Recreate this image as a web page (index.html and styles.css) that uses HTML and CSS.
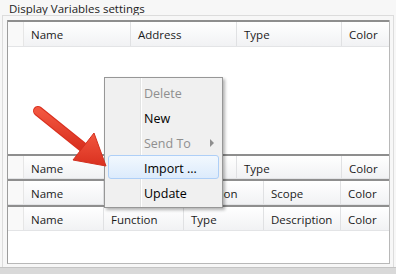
FILE: index.html
```html
<!DOCTYPE html>
<html lang="en">
<head>
    <meta charset="UTF-8">
    <title>Display Variables settings</title>
    <link rel="stylesheet" href="styles.css">
</head>
<body>
    <div class="group">
        <div class="group-title">Display Variables settings</div>
        <div class="group-box">
            <div class="grid">
                <div class="pane pane-top">
                    <div class="header cols-a">
                        <div class="cell rowhead"></div>
                        <div class="cell">Name</div>
                        <div class="cell">Address</div>
                        <div class="cell">Type</div>
                        <div class="cell">Color</div>
                    </div>
                    <div class="body"></div>
                </div>
                <div class="pane pane-short">
                    <div class="header cols-a">
                        <div class="cell rowhead"></div>
                        <div class="cell">Name</div>
                        <div class="cell"></div>
                        <div class="cell">Type</div>
                        <div class="cell">Color</div>
                    </div>
                </div>
                <div class="pane">
                    <div class="header cols-b">
                        <div class="cell rowhead"></div>
                        <div class="cell">Name</div>
                        <div class="cell"></div>
                        <div class="cell">Function</div>
                        <div class="cell">Scope</div>
                        <div class="cell">Color</div>
                    </div>
                </div>
                <div class="pane pane-last">
                    <div class="header cols-b">
                        <div class="cell rowhead"></div>
                        <div class="cell">Name</div>
                        <div class="cell">Function</div>
                        <div class="cell">Type</div>
                        <div class="cell">Description</div>
                        <div class="cell">Color</div>
                    </div>
                    <div class="body"></div>
                </div>
            </div>
        </div>
    </div>

    <!-- context menu -->
    <div class="menu">
        <div class="menu-item disabled">Delete</div>
        <div class="menu-item">New</div>
        <div class="menu-item disabled">Send To <span class="sub-arrow"></span></div>
        <div class="menu-item active">Import ...</div>
        <div class="menu-item">Update</div>
    </div>

    <!-- red pointer arrow -->
    <svg class="pointer" width="396" height="274" viewBox="0 0 396 274">
        <defs>
            <linearGradient id="red" x1="0" y1="0" x2="0" y2="1">
                <stop offset="0" stop-color="#f2563f"/>
                <stop offset="1" stop-color="#d9301f"/>
            </linearGradient>
        </defs>
        <line x1="38" y1="111" x2="84" y2="148" stroke="#d9301f" stroke-width="10" stroke-linecap="round"/>
        <line x1="38" y1="111" x2="84" y2="148" stroke="url(#red)" stroke-width="8" stroke-linecap="round"/>
        <polygon points="106,166 73,160 94,133" fill="url(#red)" stroke="#d3301f" stroke-width="1" stroke-linejoin="round"/>
    </svg>
</body>
</html>
```
FILE: styles.css
```css
* {
    margin: 0;
    padding: 0;
    box-sizing: border-box;
}

body {
    width: 396px;
    height: 274px;
    overflow: hidden;
    background: #d9d9d9;
    font-family: "Open Sans", "Noto Sans", sans-serif;
    color: #1b1b1b;
    position: relative;
}

.group {
    height: 268px;
    background: #f7f7f7;
    padding: 3px 2px 0 2px;
    display: flex;
    flex-direction: column;
    border-bottom: 1px solid #c4c4c4;
}

.group-title {
    font-size: 11.5px;
    line-height: 12px;
    padding-left: 7px;
    color: #222;
}

.group-box {
    flex: 1;
    border: 1px solid #dcdcdc;
    border-bottom: none;
    padding: 4px 3px 3px 4px;
    display: flex;
}

.grid {
    flex: 1;
    background: #fff;
    border-left: 1px solid #9c9c9c;
    border-right: 1px solid #b8b8b8;
    border-bottom: 1px solid #b8b8b8;
    display: flex;
    flex-direction: column;
}

.pane {
    border-top: 2px solid #8e8e8e;
}

.pane-top {
    height: 134px;
    display: flex;
    flex-direction: column;
}

.pane-last {
    flex: 1;
    display: flex;
    flex-direction: column;
}

.body {
    flex: 1;
    background: #fff;
}

.header {
    display: grid;
    height: 24px;
    background: linear-gradient(#ffffff, #f1f2f4);
    border-bottom: 1px solid #e3e4e6;
}

.pane-top .header {
    height: 25px;
}

.pane-short .header {
    height: 23px;
}

.cols-a {
    grid-template-columns: 15px 107px 106px 105px 1fr;
}

.cols-b {
    grid-template-columns: 15px 80px 80px 80px 77px 1fr;
}

.cell {
    font-size: 11.5px;
    line-height: 20px;
    padding: 3px 0 0 7px;
    border-left: 1px solid #e0e1e3;
    white-space: nowrap;
    overflow: hidden;
}

.cell.rowhead {
    border-left: none;
    background: #f9f9f9;
}

.cell:nth-child(2) {
    border-left-color: #e6e6e6;
}

.menu {
    position: absolute;
    left: 104px;
    top: 77px;
    width: 119px;
    height: 131px;
    background: #f0f0f0;
    border: 1px solid #979797;
    box-shadow: 2px 2px 3px rgba(0, 0, 0, 0.3);
    padding: 2px 3px;
    background-image: linear-gradient(to right, transparent 35px, #e2e3e3 35px, #e2e3e3 36px, #ffffff 36px, #ffffff 37px, transparent 37px);
}

.menu-item {
    height: 25px;
    line-height: 25px;
    font-size: 12.5px;
    padding-left: 35px;
    color: #000;
    position: relative;
    border: 1px solid transparent;
    border-radius: 3px;
}

.menu-item.disabled {
    color: #8f8f8f;
}

.menu-item.active {
    height: 24px;
    margin-bottom: 1px;
    border-color: #aecff7;
    background: linear-gradient(#f2f8fe, #dcebfc);
}

.sub-arrow {
    position: absolute;
    right: 4px;
    top: 8px;
    width: 0;
    height: 0;
    border-left: 4px solid #8f8f8f;
    border-top: 4px solid transparent;
    border-bottom: 4px solid transparent;
}

.pointer {
    position: absolute;
    left: 0;
    top: 0;
}
```
